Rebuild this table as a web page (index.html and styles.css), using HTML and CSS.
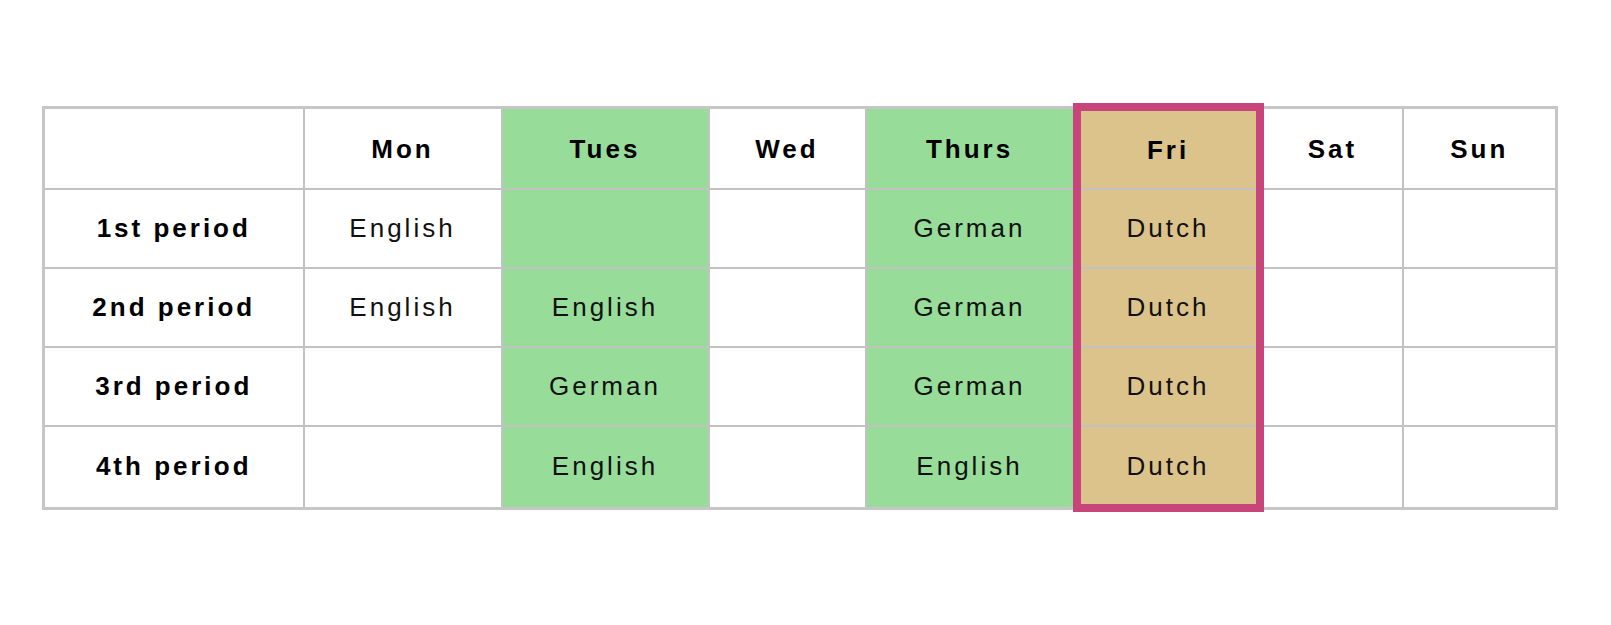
FILE: index.html
```html
<!DOCTYPE html>
<html lang="en">
<head>
<meta charset="utf-8">
<title>Timetable</title>
<link rel="stylesheet" href="styles.css">
</head>
<body>
<main class="page">
  <table class="timetable">
    <colgroup>
      <col class="c-label">
      <col class="c-mon">
      <col class="c-tue">
      <col class="c-wed">
      <col class="c-thu">
      <col class="c-fri">
      <col class="c-sat">
      <col class="c-sun">
    </colgroup>
    <thead>
      <tr>
        <th></th>
        <th>Mon</th>
        <th class="green">Tues</th>
        <th>Wed</th>
        <th class="green">Thurs</th>
        <th class="fri fri-top">Fri</th>
        <th>Sat</th>
        <th>Sun</th>
      </tr>
    </thead>
    <tbody>
      <tr>
        <th>1st period</th>
        <td>English</td>
        <td class="green"></td>
        <td></td>
        <td class="green">German</td>
        <td class="fri">Dutch</td>
        <td></td>
        <td></td>
      </tr>
      <tr>
        <th>2nd period</th>
        <td>English</td>
        <td class="green">English</td>
        <td></td>
        <td class="green">German</td>
        <td class="fri">Dutch</td>
        <td></td>
        <td></td>
      </tr>
      <tr>
        <th>3rd period</th>
        <td></td>
        <td class="green">German</td>
        <td></td>
        <td class="green">German</td>
        <td class="fri">Dutch</td>
        <td></td>
        <td></td>
      </tr>
      <tr class="last-row">
        <th>4th period</th>
        <td></td>
        <td class="green">English</td>
        <td></td>
        <td class="green">English</td>
        <td class="fri fri-bottom">Dutch</td>
        <td></td>
        <td></td>
      </tr>
    </tbody>
  </table>
</main>
</body>
</html>
```
FILE: styles.css
```css
html, body {
  margin: 0;
  padding: 0;
  background: #ffffff;
}

.page {
  padding: 103px 0 0 42px;
}

.timetable {
  border-collapse: collapse;
  table-layout: fixed;
  width: 1513px;
  border: 3px solid #c6c6c6;
  font-family: "Liberation Sans", Arial, sans-serif;
  font-size: 26px;
  letter-spacing: 3px;
  color: #111111;
}

.c-label { width: 260px; }
.c-mon { width: 198px; }
.c-tue { width: 207px; }
.c-wed { width: 157px; }
.c-thu { width: 211px; }
.c-fri { width: 183px; }
.c-sat { width: 143px; }
.c-sun { width: 154px; }

.timetable th,
.timetable td {
  border: 2px solid #c2c2c2;
  padding: 0;
  text-align: center;
  vertical-align: middle;
  height: 77px;
}

.timetable th {
  font-weight: bold;
  color: #000000;
}

.timetable thead th {
  height: 76px;
  padding-top: 3px;
}

.timetable .last-row th,
.timetable .last-row td {
  height: 80px;
}

.green {
  background: #98dc9a;
}

.timetable .fri {
  background: #dcc38b;
  border-left: 8px solid #c7457a;
  border-right: 8px solid #c7457a;
}

.timetable thead .fri-top {
  border-top: 8px solid #c7457a;
  padding-top: 2px;
  padding-bottom: 0;
  height: 50px;
}

.timetable .last-row .fri-bottom {
  border-bottom: 8px solid #c7457a;
  padding-top: 3px;
  height: 50px;
}
```
